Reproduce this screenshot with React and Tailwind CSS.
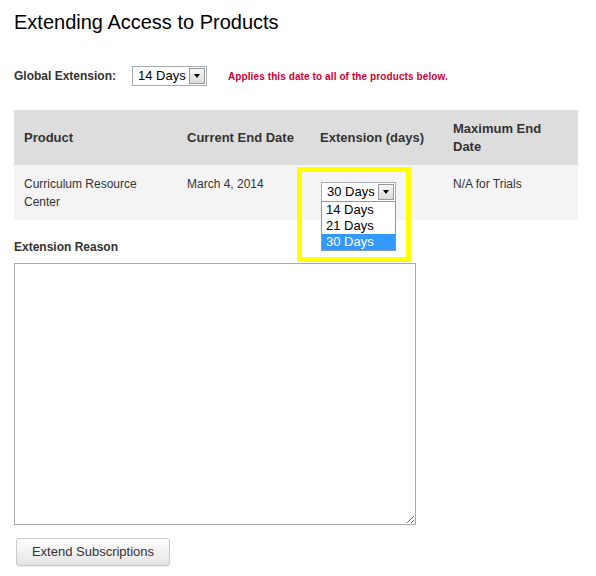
import React from "react";

function FakeSelect({ value }) {
  return (
    <div className="flex h-[20px] w-[75px] items-center justify-between border border-[#a5acb2] bg-white pl-[5px] pr-[1px]">
      <span className="text-[13px] leading-[18px] text-black">{value}</span>
      <span className="flex h-[16px] w-[16px] items-center justify-center border border-[#9a9a9a] bg-gradient-to-b from-[#f6f6f6] to-[#dcdcdc]">
        <span className="h-0 w-0 border-x-[3.5px] border-t-[4px] border-x-transparent border-t-black" />
      </span>
    </div>
  );
}

const options = ["14 Days", "21 Days", "30 Days"];

export default function App() {
  return (
    <div className="relative h-[576px] w-[596px] bg-white px-[14px] font-['Liberation_Sans',Arial,sans-serif] text-[#333]">
      <h1 className="pt-[10px] text-[20px] leading-[24px] text-black">Extending Access to Products</h1>

      <div className="mt-[32px] flex h-[20px] items-center">
        <label className="w-[118px] text-[12px] font-bold">Global Extension:</label>
        <FakeSelect value="14 Days" />
        <span className="ml-[21px] text-[10px] font-bold tracking-[0.1px] text-[#d10034]">
          Applies this date to all of the products below.
        </span>
      </div>

      <div className="mt-[24px] w-[564px]">
        <div className="grid h-[55px] grid-cols-[163px_133px_133px_135px] items-center bg-[#dddddd] text-[13px] font-bold leading-[18px]">
          <div className="px-[10px]">Product</div>
          <div className="px-[10px]">Current End Date</div>
          <div className="px-[10px]">Extension (days)</div>
          <div className="px-[10px]">Maximum End Date</div>
        </div>
        <div className="grid h-[55px] grid-cols-[163px_133px_133px_135px] bg-[#f4f4f4] text-[12px] leading-[18px]">
          <div className="px-[10px] pt-[10px]">Curriculum Resource Center</div>
          <div className="px-[10px] pt-[10px]">March 4, 2014</div>
          <div className="relative pl-[11px] pt-[17px]">
            <FakeSelect value="30 Days" />
            <div className="absolute left-[11px] top-[36px] z-10 w-[75px] border border-[#7f9db9] bg-white text-[13px] leading-[16px] text-black">
              {options.map((o) => (
                <div key={o} className={o === "30 Days" ? "bg-[#3399ff] px-[4px] text-white" : "px-[4px]"}>
                  {o}
                </div>
              ))}
            </div>
            <div className="pointer-events-none absolute left-[-13px] top-[2px] z-20 h-[95px] w-[114px] border-[5px] border-[#ffff00]" />
          </div>
          <div className="px-[10px] pt-[10px]">N/A for Trials</div>
        </div>
      </div>

      <label className="mt-[19px] block text-[12px] font-bold leading-[16px]">Extension Reason</label>
      <textarea className="mt-[8px] block h-[262px] w-[402px] resize border border-[#aaaaaa] bg-white" />

      <button className="ml-[2px] mt-[13px] flex h-[28px] w-[154px] items-center justify-center rounded-[3px] border border-[#c8c8c8] bg-gradient-to-b from-white to-[#e4e4e4] text-[13px] text-[#333] shadow-[0_1px_1px_rgba(0,0,0,0.08)]">
        Extend Subscriptions
      </button>
    </div>
  );
}
